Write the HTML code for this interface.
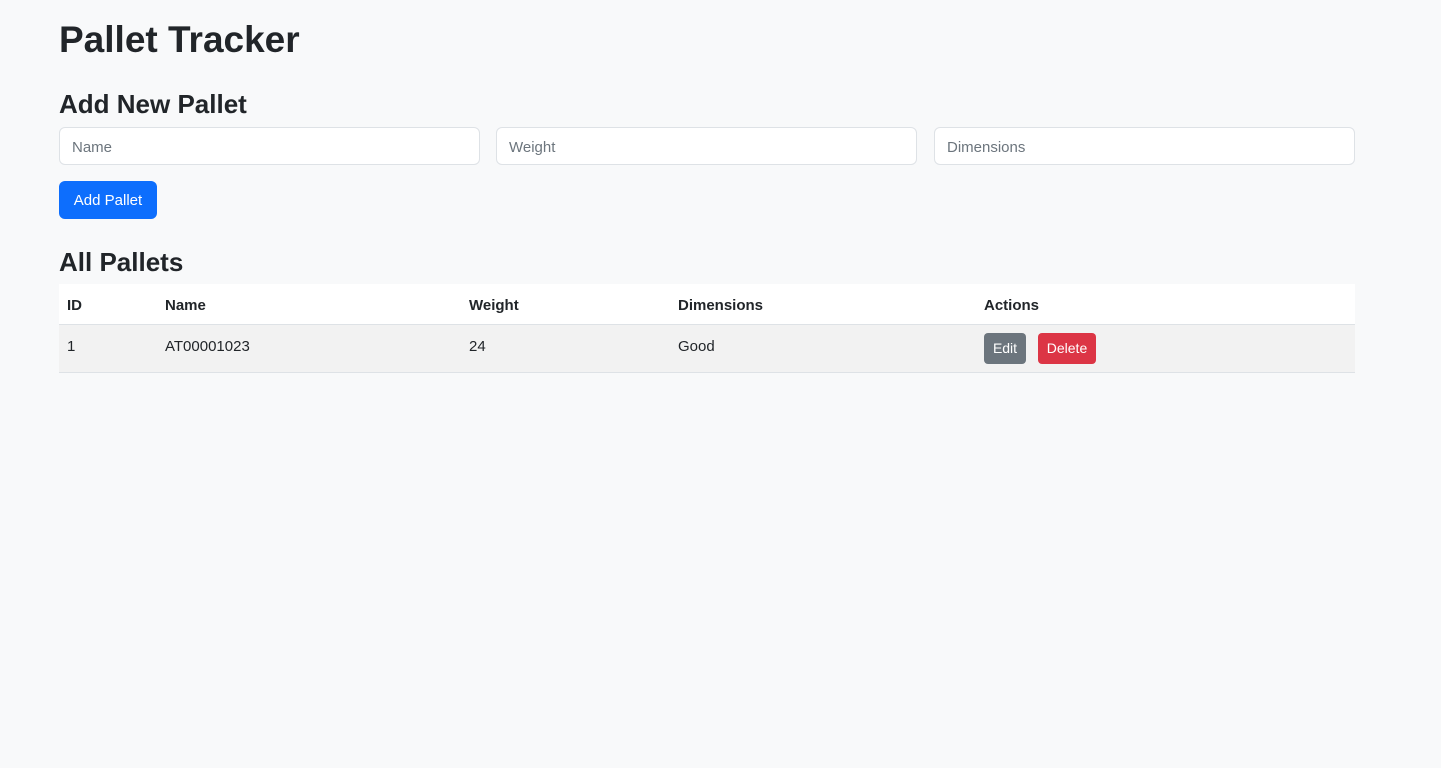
<!DOCTYPE html>
<html><head><meta charset="utf-8"><style>
body{margin:0;background:#f8f9fa;font-family:"Liberation Sans",sans-serif;color:#212529;font-size:16px}
.c{position:absolute;left:59px;width:1296px;top:0}
h1{position:absolute;top:15px;left:0;margin:0;font-size:37px;font-weight:600;line-height:50px}
h3{position:absolute;margin:0;font-size:26px;font-weight:600;line-height:34px;left:0}
input{position:absolute;top:127px;height:38px;box-sizing:border-box;border:1px solid #dee2e6;border-radius:6px;background:#fff;padding:2px 12px 0;font:15px "Liberation Sans",sans-serif;width:421px}
input::placeholder{color:#6c757d}
.btn{position:absolute;border-radius:6px;color:#fff;display:flex;align-items:center;justify-content:center}
table{position:absolute;top:284px;left:0;width:1296px;border-collapse:collapse;font-size:15px}
th,td{text-align:left;padding:0 8px;border-bottom:1px solid #dee2e6}
th{height:40px;background:#fff;padding-top:4px;box-sizing:border-box}
td{height:47px;background:#f2f2f2;padding-bottom:3px;box-sizing:border-box}
</style></head><body><div class="c">
<h1>Pallet Tracker</h1>
<h3 style="top:87px">Add New Pallet</h3>
<input style="left:0" placeholder="Name"><input style="left:437px" placeholder="Weight"><input style="left:875px" placeholder="Dimensions">
<div class="btn" style="top:181px;left:0;width:98px;height:38px;background:#0d6efd;font-size:15px">Add Pallet</div>
<h3 style="top:245px">All Pallets</h3>
<table><tr><th style="width:98px">ID</th><th style="width:304px">Name</th><th style="width:209px">Weight</th><th style="width:306px">Dimensions</th><th>Actions</th></tr>
<tr><td>1</td><td>AT00001023</td><td>24</td><td>Good</td><td><span style="position:relative;display:block;height:44px">
<span class="btn" style="top:8px;left:0;width:42px;height:31px;background:#6c757d;font-size:14px;border-radius:4px">Edit</span>
<span class="btn" style="top:8px;left:54px;width:58px;height:31px;background:#dc3545;font-size:14px;border-radius:4px">Delete</span></span></td></tr></table>
</div></body></html>
